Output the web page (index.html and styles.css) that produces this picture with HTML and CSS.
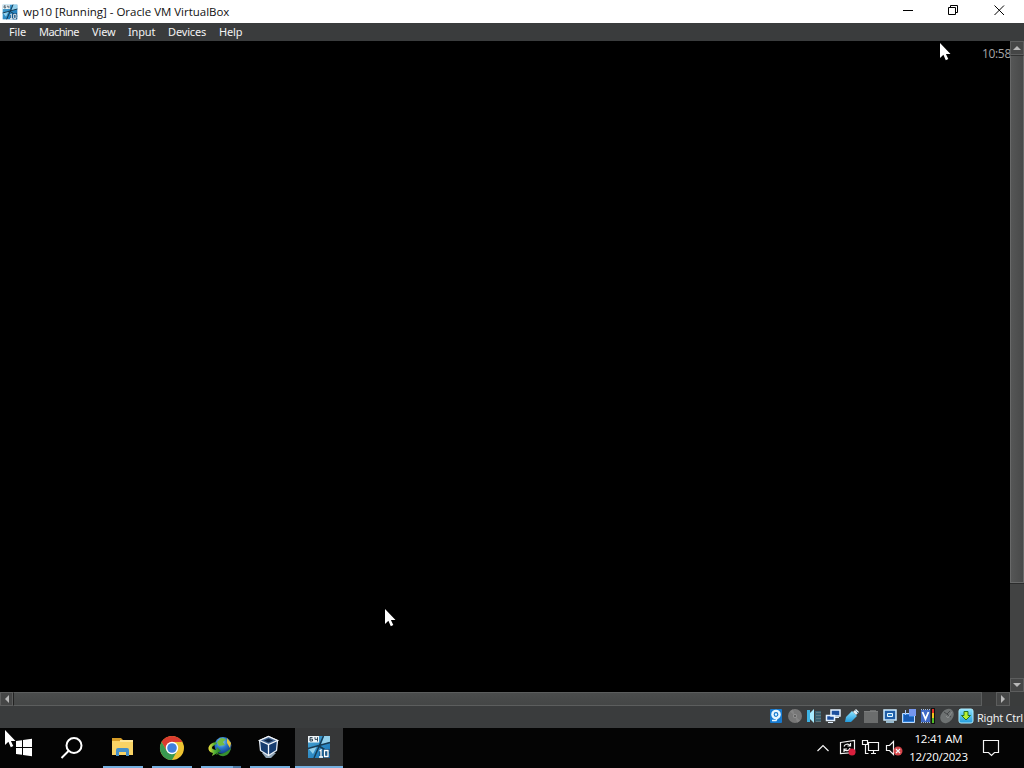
FILE: index.html
```
<!DOCTYPE html>
<html lang="en">
<head>
    <meta charset="UTF-8">
    <meta name="viewport" content="width=device-width, initial-scale=1.0">
    <title>wp10 [Running] - Oracle VM VirtualBox</title>
    <link rel="stylesheet" href="styles.css">
</head>
<body>
    <!-- shared drawings -->
    <svg class="defs" width="0" height="0">
        <defs>
            <linearGradient id="sky" x1="0" y1="0" x2="1" y2="1">
                <stop offset="0" stop-color="#4aa5d2"/>
                <stop offset="1" stop-color="#1472b8"/>
            </linearGradient>
            <linearGradient id="aqua" x1="0" y1="0" x2="0" y2="1">
                <stop offset="0" stop-color="#8ce4ff"/>
                <stop offset="1" stop-color="#239bdc"/>
            </linearGradient>
            <radialGradient id="globe" cx=".4" cy=".3" r=".7">
                <stop offset="0" stop-color="#9bd8f4"/>
                <stop offset=".5" stop-color="#2b78cc"/>
                <stop offset="1" stop-color="#123c82"/>
            </radialGradient>
            <linearGradient id="swoosh" x1="0" y1="0" x2="1" y2="0">
                <stop offset="0" stop-color="#f1e13b"/>
                <stop offset=".5" stop-color="#4fae35"/>
                <stop offset="1" stop-color="#1b7426"/>
            </linearGradient>
            <symbol id="cursor" viewBox="0 0 12 19">
                <path fill="#fff" d="M1 0v15l3.4-3.2 2.4 5.4 2.5-1.1-2.4-5.2h4.6z"/>
            </symbol>
            <symbol id="win10" viewBox="0 0 24 24">
                <path fill="url(#sky)" d="M1 1h22v22H1z"/>
                <path fill="#a5dcf2" d="M17 1h6v6l-9 3zM1 13l9-2-4 8z" opacity=".85"/>
                <path fill="none" stroke="#173c55" stroke-width="1.500" d="M16.500 1 7 23M1 13.500l22-6M12 11l11 7"/>
                <path fill="#eef5f8" d="M1 1h11v6.500H1z"/>
                <path fill="none" stroke="#20394b" stroke-width=".9" d="M5.500 2.500H3V6h2.500V4.200H3M8 2.200v2.200h2.500M10.500 2.200v4.300"/>
                <path fill="none" stroke="#0f4774" stroke-width="3" d="M14 15v7M17.500 15.500h3.500v6h-3.500z"/>
                <path fill="none" stroke="#fff" stroke-width="1.300" d="M12.500 16l1.500-1v7M12 22h4M17.500 15.500h3.500v6h-3.500z"/>
            </symbol>
        </defs>
    </svg>

    <div class="screen">
        <div class="titlebar">
            <svg class="app-icon" width="16" height="16"><use href="#win10"/></svg>
            <span class="title">wp10 [Running] - Oracle VM VirtualBox</span>
            <div class="controls">
                <svg width="46" height="23" viewBox="0 0 46 23"><path d="M17 10.500h10"/></svg>
                <svg width="45" height="23" viewBox="0 0 45 23"><path d="M16.500 7.500h7v7h-7zM18.500 7.500v-2h7v7h-2"/></svg>
                <svg width="47" height="23" viewBox="0 0 47 23"><path d="m17.500 5.500 9.500 9.500M27 5.500 17.500 15"/></svg>
            </div>
        </div>

        <div class="menubar">
            <span class="m-file">File</span>
            <span class="m-machine">Machine</span>
            <span class="m-view">View</span>
            <span class="m-input">Input</span>
            <span class="m-devices">Devices</span>
            <span class="m-help">Help</span>
        </div>

        <div class="guest-area">
            <div class="guest"><span class="guest-time">10:58</span></div>
            <div class="vscroll">
                <div class="sbtn"><svg width="8" height="4"><path d="M0 4 4 0l4 4z"/></svg></div>
                <div class="vthumb"></div>
                <div class="vtrack"></div>
                <div class="sbtn"><svg width="8" height="4"><path d="m0 0 4 4 4-4z"/></svg></div>
            </div>
        </div>

        <div class="hscroll">
            <div class="sbtn first"><svg width="4" height="8"><path d="M4 0 0 4l4 4z"/></svg></div>
            <div class="hthumb"></div>
            <div class="htrack"></div>
            <div class="sbtn"><svg width="4" height="8"><path d="m0 0 4 4-4 4z"/></svg></div>
            <div class="corner"></div>
        </div>

        <div class="statusbar">
            <!-- hard disk -->
            <svg viewBox="0 0 16 16"><rect x="2" y="1" width="12" height="14" rx="1" fill="#1679cf"/><circle cx="8" cy="6.500" r="4.800" fill="#e7f6ff"/><circle cx="8" cy="6.500" r="1.800" fill="none" stroke="#1679cf" stroke-width="1.200"/><path d="M4 12.500h4l2-4" fill="none" stroke="#e7f6ff" stroke-width="1.500"/></svg>
            <!-- optical -->
            <svg viewBox="0 0 16 16"><circle cx="8" cy="8" r="7" fill="#777"/><path d="M8 8 3 3.500a7 7 0 0 1 3-2zM8 8l5 4.500a7 7 0 0 1-3 2z" fill="#848484"/><circle cx="8" cy="8" r="2" fill="#949494"/><circle cx="8" cy="8" r="1" fill="#555"/></svg>
            <!-- audio -->
            <svg viewBox="0 0 16 16"><path fill="#3db3e5" d="M1 2h3v12H1z"/><path fill="#a8ecff" d="m4 5 4-4v14l-4-4z"/><path fill="#38606f" d="M9 3h6v11H9z"/><path stroke="#607880" d="M10 4.500h5M10 7.500h5M10 10.500h5M10 13.500h5"/></svg>
            <!-- network -->
            <svg viewBox="0 0 16 16"><path fill="#1d4f9e" stroke="#e4f1ff" stroke-width="1.500" d="M6 2h9v6H6zM1.500 7.500h8v5h-8z"/><path stroke="#e4f1ff" d="M3 14.500h5M10 9.500h4"/></svg>
            <!-- usb -->
            <svg viewBox="0 0 16 16"><path fill="url(#aqua)" d="m1 14 1-5 6-6 5 5-6 6z"/><path fill="#e3edf4" d="m9 4 3-3 3 3-3 3z"/><path stroke="#36738f" d="m11.500 2.500 1 1M13 4l1 1"/></svg>
            <!-- shared folders -->
            <svg viewBox="0 0 16 16"><path fill="#6b6d6d" d="M1 3h6V2h6v1h2v12H1z"/><path stroke="#7b7d7d" d="M1 3.500h14"/></svg>
            <!-- display -->
            <svg viewBox="0 0 16 16"><path fill="#205da5" stroke="#cbeaff" stroke-width="1.500" d="M2 2h12v10H2z"/><path fill="#2e82c9" stroke="#e7f7ff" d="M5.500 5.500h5v3h-5z"/><path stroke="#b8e4ff" stroke-width="1.500" d="M4 14h8"/></svg>
            <!-- recording -->
            <svg viewBox="0 0 16 16"><path fill="#2b80dc" stroke="#bddbff" d="M1.500 5.500h12v9h-12z"/><path fill="#7696ee" d="M8 1h7v7H8z"/><path fill="#185ab1" d="M3 7h5v2h5v4H3z"/><path stroke="#a2c5ff" d="M4.500 2v5"/></svg>
            <!-- cpu -->
            <svg viewBox="0 0 16 16"><path fill="#416bc6" d="M1 2h9v12H1z"/><path fill="none" stroke="#fff" stroke-width="1.800" d="M2.500 4 5.500 11l3-7"/><path stroke="#9dbbea" stroke-dasharray="1 1" d="M1 1.500h9M1 14.500h9"/><path fill="#111" d="M11 0h4v16h-4z"/><path fill="#e33226" d="M12 1h2v5h-2z"/><path fill="#f2c51d" d="M12 5h2v5h-2z"/><path fill="#52bd27" d="M12 10h2v5h-2z"/></svg>
            <!-- mouse -->
            <svg viewBox="0 0 16 16"><ellipse cx="8" cy="8" rx="6" ry="7.800" transform="rotate(40 8 8)" fill="#6e7272"/><path fill="none" stroke="#454849" d="m5 4 7 5M8 6l3-3"/><path fill="none" stroke="#8b8f8f" d="m7 8 2 2 4-6"/></svg>
            <!-- keyboard -->
            <svg viewBox="0 0 16 16"><rect x="1" y="1" width="14" height="14" rx="2" fill="url(#aqua)" stroke="#b0edff"/><path fill="#b6ef32" stroke="#287322" d="M6 3.500h4v4h2.500L8 12 3.500 7.500H6z"/></svg>
            <span class="hostkey">Right Ctrl</span>
        </div>

        <div class="taskbar">
            <div class="task start"><svg width="48" height="40"><path fill="#fff" d="m16 13 6-.8V19h-6zm7-1 9-1.200V19h-9zm-7 8h6v6.800L16 26zm7 0h9v8.200L23 27z"/></svg></div>
            <div class="task search"><svg width="48" height="40"><circle cx="26" cy="17.500" r="7.500"/><path d="m20.500 23-7 7"/></svg></div>
            <div class="task open">
                <svg width="40" height="40" viewBox="0 0 40 40"><path fill="#d69d28" d="M9 10h9l2 2h10v3H9z"/><path fill="#f9d365" d="M9 13h21v14H9z"/><path fill="#ffe697" d="M17 12h13v2H17z"/><path fill="#4590ca" d="M13 28v-6q0-2 2-2h9q2 0 2 2v6h-3v-4h-7v4z"/><path fill="#f9d365" d="M17 24h5v3h-5z"/></svg>
            </div>
            <div class="task open">
                <svg width="40" height="40" viewBox="-20 -20 40 40"><circle r="12" fill="#edc332"/><path fill="#db3b2f" d="M-10.400-6A12 12 0 0 1 10.400-6H0L-5.200 3z"/><path fill="#399950" d="M-10.400-6A12 12 0 0 0 0 12L5.200 3H-5.200z"/><circle r="6.200" fill="#fff"/><circle r="4.800" fill="#4180dc"/></svg>
            </div>
            <div class="task open group">
                <svg width="40" height="40" viewBox="0 0 40 40"><circle cx="22" cy="17.500" r="8.500" fill="url(#globe)"/><path fill="#73bc41" d="m16 14 4-4 5 1-3 3 2 3-6 1z"/><path fill="#e7c43b" d="m26 10 4 5-1 5-3-5z"/><path fill="url(#swoosh)" d="M15 14C6 15 5 24 12 25l-1 3 9-5-4-4-1 3c-6-1-5-4 1-6z"/><path fill="#37912c" d="M16 25c4 2 9 0 14-5-1 7-8 11-13 6l-2 1z"/></svg>
            </div>
            <div class="task open">
                <svg width="40" height="40" viewBox="0 0 40 40"><path fill="#8fa4b5" d="m12 25 4 5h5l5-5-7-2z"/><path fill="#173d70" stroke="#e5edf7" stroke-width="1.300" stroke-linejoin="round" d="m18.500 8.500 9 4-1 10-8 5-8-5-1-10z"/><path fill="#456795" stroke="#f3f7fb" stroke-width="1.300" d="m9.500 12.500 9 4 9-4-9-4zM18.500 16.500v11"/><path fill="#0c2445" d="m14 12.500 4.500-2 4.500 2-4.500 2z"/></svg>
            </div>
            <div class="task open active">
                <svg width="48" height="40"><use href="#win10" x="12" y="7" width="24" height="24"/></svg>
            </div>

            <div class="tray">
                <svg width="24" height="40"><path d="m9.500 23 5.500-5.500 5.500 5.500"/></svg>
                <svg width="24" height="40"><path d="m8.500 14.500 14-2v12l-14 1zM12 18.500a3.500 3.500 0 0 1 6-1M18.500 15v3h-3M18 20a3.500 3.500 0 0 1-6 1.500M12 24v-3h3"/><circle cx="20" cy="24" r="3.500" fill="#d91f3d" stroke="none"/></svg>
                <svg width="24" height="40"><path d="M12.500 14.500h10v8h-10zM15 25.500h5M17.500 22.500v3M6.500 12.500h5v4h-5zM9.500 16.500v9h3"/></svg>
                <svg width="24" height="40"><path d="M6.500 17.500h3l4-4v13l-4-4h-3z"/><circle cx="18" cy="23" r="4.500" fill="#d6464b" stroke="none"/><path d="m16 21 4 4M20 21l-4 4"/></svg>
                <div class="clock"><span class="time">12:41 AM</span><span class="date">12/20/2023</span></div>
                <svg class="notify" width="47" height="40"><path d="M6.500 12.500h15v12h-4l-3 3-3-3h-5z"/></svg>
            </div>
        </div>

        <svg class="cursor c1"><use href="#cursor"/></svg>
        <svg class="cursor c2"><use href="#cursor"/></svg>
        <svg class="cursor c3"><use href="#cursor"/></svg>
    </div>
</body>
</html>
```
FILE: styles.css
```
* {
    padding: 0;
    margin: 0;
    box-sizing: border-box;
}
body {
    background-color: #000;
    font-family: "Noto Sans", "Open Sans", sans-serif;
    overflow: hidden;
}
svg {
    display: block;
    flex: none;
}
.defs {
    position: absolute;
}
.screen {
    position: relative;
    width: 1024px;
    height: 768px;
    display: flex;
    flex-direction: column;
}

/* window frame */
.titlebar {
    height: 23px;
    background: #fff;
    display: flex;
    align-items: center;
    padding-left: 2px;
}
.title {
    margin-left: 5px;
    font-family: "Open Sans", sans-serif;
    font-size: 11.5px;
    letter-spacing: -0.02px;
    color: #111;
    white-space: nowrap;
}
.controls {
    display: flex;
    margin-left: auto;
}
.controls path {
    fill: none;
    stroke: #000;
}
.menubar {
    height: 18px;
    background: #3a3c3d;
    color: #f2f2f2;
    display: flex;
    padding-left: 9px;
    font-size: 11px;
    line-height: 18px;
    letter-spacing: -0.15px;
    white-space: nowrap;
}
.m-file { width: 30px; }
.m-machine { width: 53px; letter-spacing: -0.6px; }
.m-view { width: 36px; }
.m-input { width: 40px; }
.m-devices { width: 51px; }

.guest-area {
    height: 651px;
    display: flex;
}
.guest {
    flex: 1;
    background: #000;
    display: flex;
    justify-content: flex-end;
    overflow: hidden;
}
.guest-time {
    color: #a5a5a5;
    font-family: "Open Sans", sans-serif;
    font-size: 12px;
    line-height: 16px;
    margin: 5px -1px 0 0;
    letter-spacing: -0.3px;
}

/* scrollbars */
.vscroll {
    width: 14px;
    background: #454646;
    display: flex;
    flex-direction: column;
}
.sbtn {
    flex: none;
    width: 14px;
    height: 14px;
    background: #454646;
    border: 1px solid #5c5d5d;
    display: flex;
    align-items: center;
    justify-content: center;
}
.first {
    width: 13px;
}
.sbtn path {
    fill: #b8b8b8;
}
.vthumb {
    height: 528px;
    background: linear-gradient(90deg, #555656, #484949);
    border: 1px solid #686969;
    border-top-color: #303131;
}
.vtrack {
    flex: 1;
    border-top: 1px solid #2b2c2c;
    background: #424343;
}
.hscroll {
    height: 14px;
    display: flex;
    background: #3a3c3c;
}
.hthumb {
    width: 969px;
    background: linear-gradient(#4b4d4d, #444646);
    border: 1px solid #5c5e5e;
    border-left-color: #222;
}
.htrack {
    width: 14px;
    background: #3a3b3b;
}
.corner {
    flex: 1;
}

.statusbar {
    height: 22px;
    background: #3a3c3d;
    display: flex;
    align-items: center;
    justify-content: flex-end;
    gap: 3px;
    padding-right: 1px;
}
.statusbar svg {
    width: 16px;
    height: 16px;
    margin-top: -2px;
    fill: none;
}
.hostkey {
    color: #f0f0f0;
    font-size: 11px;
    letter-spacing: -0.25px;
    width: 46px;
    white-space: nowrap;
}

/* taskbar */
.taskbar {
    height: 40px;
    background: #040404;
    display: flex;
}
.task {
    width: 48px;
    height: 40px;
    flex: none;
    display: flex;
    justify-content: center;
}
.search svg {
    fill: none;
    stroke: #fff;
    stroke-width: 2;
}
.open {
    width: 40px;
    margin-left: 9px;
    border-bottom: 2px solid #76b0e0;
}
.search + .open {
    margin-left: 7px;
}
.group {
    position: relative;
}
.group::after {
    content: "";
    position: absolute;
    right: 0;
    bottom: -2px;
    width: 8px;
    height: 2px;
    background: #4f7ba5;
}
.active {
    width: 48px;
    margin-left: 5px;
    background: #363738;
}
.tray {
    display: flex;
    margin-left: auto;
}
.tray svg {
    fill: none;
    stroke: #f4f4f4;
    stroke-width: 1.2;
}
.clock {
    width: 69px;
    margin-right: 4px;
    display: flex;
    flex-direction: column;
    align-items: center;
    color: #fff;
    font-family: "Open Sans", sans-serif;
    font-size: 11.5px;
    line-height: 18px;
    padding-top: 2px;
    letter-spacing: -0.25px;
    white-space: nowrap;
}

/* pointers float over everything */
.cursor {
    position: absolute;
    width: 12px;
    height: 19px;
}
.c1 { left: 939px; top: 43px; }
.c2 { left: 384px; top: 609px; }
.c3 { left: 4px; top: 730px; }
```
